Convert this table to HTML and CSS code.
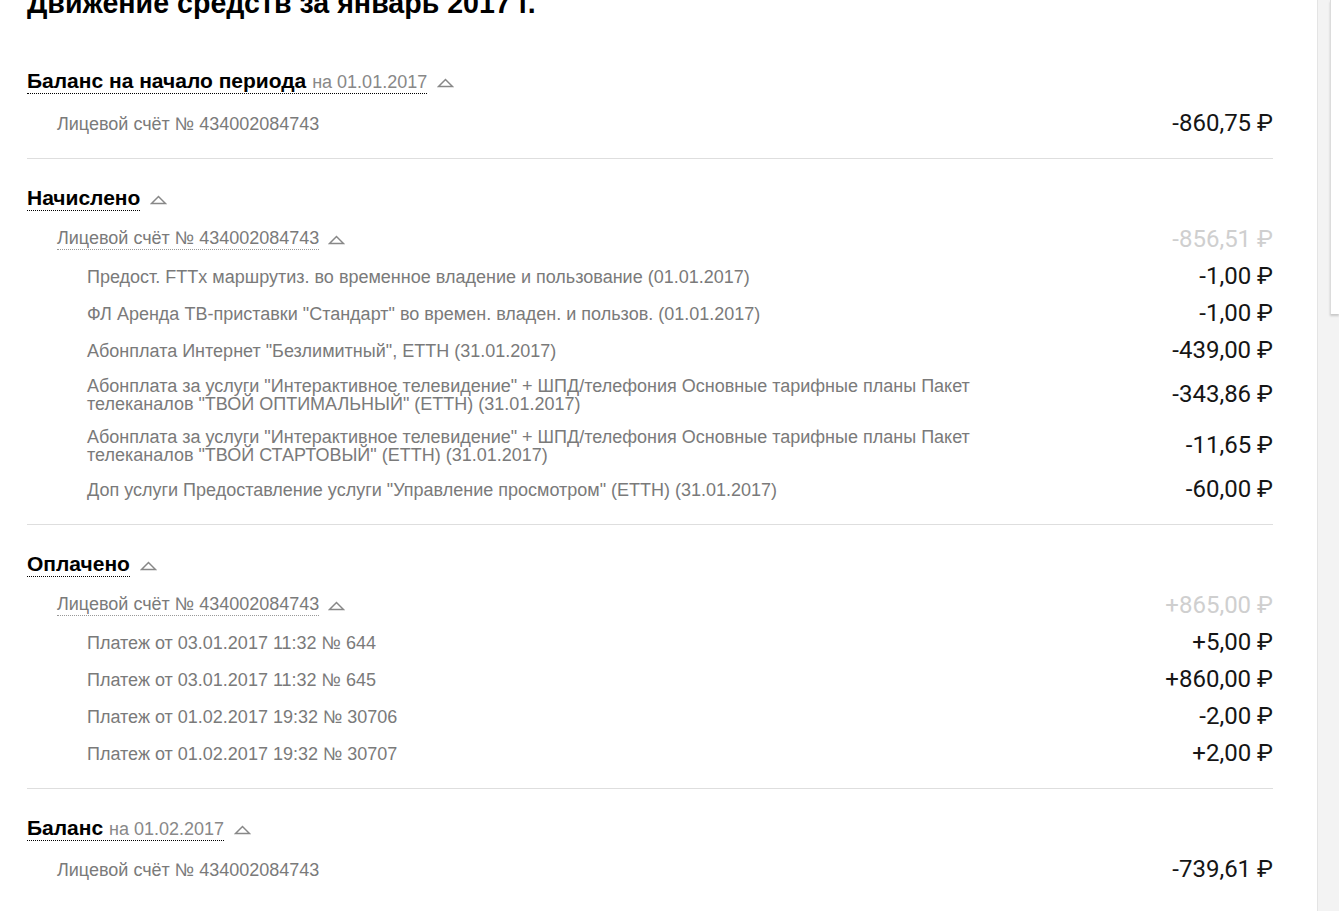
FILE: index.html
```html
<!DOCTYPE html>
<html lang="ru">
<head>
<meta charset="utf-8">
<title>Движение средств</title>
<link rel="stylesheet" href="styles.css">
</head>
<body>
<div class="page">
  <main class="content">
    <h1 class="title">Движение средств за январь 2017 г.</h1>

    <section class="block">
      <div class="head">
        <span class="head-link"><b>Баланс на начало периода</b> <span class="date">на 01.01.2017</span></span>
        <svg class="caret" viewBox="0 0 17 10" width="17" height="10"><polygon points="1.5,8.5 8.5,1.5 15.5,8.5" fill="none" stroke="#888" stroke-width="1.5"/></svg>
      </div>
      <div class="group first">
        <div class="row acc"><span class="label">Лицевой счёт № 434002084743</span><span class="amount">-860,75 ₽</span></div>
      </div>
    </section>

    <section class="block">
      <div class="head">
        <span class="head-link"><b>Начислено</b></span>
        <svg class="caret" viewBox="0 0 17 10" width="17" height="10"><polygon points="1.5,8.5 8.5,1.5 15.5,8.5" fill="none" stroke="#888" stroke-width="1.5"/></svg>
      </div>
      <div class="group">
        <div class="row acc"><span class="acc-head"><span class="label link">Лицевой счёт № 434002084743</span><svg class="caret" viewBox="0 0 17 10" width="17" height="10"><polygon points="1.5,8.5 8.5,1.5 15.5,8.5" fill="none" stroke="#888" stroke-width="1.5"/></svg></span><span class="amount muted">-856,51 ₽</span></div>
        <div class="items">
          <div class="row"><span class="label">Предост. FTTx маршрутиз. во временное владение и пользование (01.01.2017)</span><span class="amount">-1,00 ₽</span></div>
          <div class="row"><span class="label">ФЛ Аренда ТВ-приставки "Стандарт" во времен. владен. и пользов. (01.01.2017)</span><span class="amount">-1,00 ₽</span></div>
          <div class="row"><span class="label">Абонплата Интернет "Безлимитный", ЕТТН (31.01.2017)</span><span class="amount">-439,00 ₽</span></div>
          <div class="row multi"><span class="label">Абонплата за услуги "Интерактивное телевидение" + ШПД/телефония Основные тарифные планы Пакет телеканалов "ТВОЙ ОПТИМАЛЬНЫЙ" (ЕТТН) (31.01.2017)</span><span class="amount">-343,86 ₽</span></div>
          <div class="row multi"><span class="label">Абонплата за услуги "Интерактивное телевидение" + ШПД/телефония Основные тарифные планы Пакет телеканалов "ТВОЙ СТАРТОВЫЙ" (ЕТТН) (31.01.2017)</span><span class="amount">-11,65 ₽</span></div>
          <div class="row"><span class="label">Доп услуги Предоставление услуги "Управление просмотром" (ЕТТН) (31.01.2017)</span><span class="amount">-60,00 ₽</span></div>
        </div>
      </div>
    </section>

    <section class="block">
      <div class="head">
        <span class="head-link"><b>Оплачено</b></span>
        <svg class="caret" viewBox="0 0 17 10" width="17" height="10"><polygon points="1.5,8.5 8.5,1.5 15.5,8.5" fill="none" stroke="#888" stroke-width="1.5"/></svg>
      </div>
      <div class="group">
        <div class="row acc"><span class="acc-head"><span class="label link">Лицевой счёт № 434002084743</span><svg class="caret" viewBox="0 0 17 10" width="17" height="10"><polygon points="1.5,8.5 8.5,1.5 15.5,8.5" fill="none" stroke="#888" stroke-width="1.5"/></svg></span><span class="amount muted">+865,00 ₽</span></div>
        <div class="items">
          <div class="row"><span class="label">Платеж от 03.01.2017 11:32 № 644</span><span class="amount">+5,00 ₽</span></div>
          <div class="row"><span class="label">Платеж от 03.01.2017 11:32 № 645</span><span class="amount">+860,00 ₽</span></div>
          <div class="row"><span class="label">Платеж от 01.02.2017 19:32 № 30706</span><span class="amount">-2,00 ₽</span></div>
          <div class="row"><span class="label">Платеж от 01.02.2017 19:32 № 30707</span><span class="amount">+2,00 ₽</span></div>
        </div>
      </div>
    </section>

    <section class="block last">
      <div class="head">
        <span class="head-link"><b>Баланс</b> <span class="date">на 01.02.2017</span></span>
        <svg class="caret" viewBox="0 0 17 10" width="17" height="10"><polygon points="1.5,8.5 8.5,1.5 15.5,8.5" fill="none" stroke="#888" stroke-width="1.5"/></svg>
      </div>
      <div class="group">
        <div class="row acc"><span class="label">Лицевой счёт № 434002084743</span><span class="amount">-739,61 ₽</span></div>
      </div>
    </section>
  </main>
  <aside class="side"><div class="side-card"></div></aside>
</div>
</body>
</html>
```

FILE: styles.css
```css
html, body {
  margin: 0;
  padding: 0;
  overflow: hidden;
  background: #fff;
}

body {
  font-family: "Liberation Sans", Arial, sans-serif;
  color: #000;
}

.page {
  display: flex;
  min-height: 100vh;
}

.content {
  flex: 0 0 1317px;
  box-sizing: border-box;
  padding: 0 44px 0 27px;
}

.title {
  margin: -13px 0 0;
  font-size: 28.6px;
  line-height: 32px;
  font-weight: bold;
}

.block {
  border-bottom: 1px solid #dedede;
  padding-bottom: 16px;
  margin-bottom: 29px;
}

.block:first-of-type {
  margin-top: 52px;
}

.block.last {
  border-bottom: none;
}

.head {
  display: flex;
  align-items: center;
  gap: 10px;
}

.head-link {
  display: block;
  height: 20px;
  font-size: 21px;
  line-height: 20px;
  padding-bottom: 2px;
  border-bottom: 1px dotted #000;
  white-space: nowrap;
}

.head-link b {
  font-size: 21px;
  font-weight: bold;
  color: #000;
}

.date {
  font-size: 18px;
  color: #888;
}

.caret {
  display: block;
  flex: none;
}

.group {
  margin-top: 10px;
  padding-left: 30px;
}

.group.first {
  margin-top: 11px;
}

.items {
  padding-left: 30px;
}

.row {
  display: flex;
  justify-content: space-between;
  align-items: center;
  padding: 8px 0;
}

.row.multi {
  padding: 7.5px 0;
}

.label {
  font-size: 18px;
  line-height: 18px;
  color: #7a7a7a;
  max-width: 900px;
}

.acc-head {
  display: flex;
  align-items: center;
  gap: 9px;
}

.label.link {
  display: block;
  padding-bottom: 2px;
  border-bottom: 1px dotted #999;
}

.amount {
  font-family: Roboto, "DejaVu Sans", sans-serif;
  font-size: 24px;
  line-height: 21px;
  color: #151515;
  white-space: nowrap;
  flex: none;
}

.amount.muted {
  color: #cfcfcf;
}

.side {
  flex: 1;
  background: #f3f3f3;
  border-left: 1px solid #e4e4e4;
  display: flex;
  justify-content: flex-end;
  align-items: flex-start;
}

.side-card {
  width: 8px;
  height: 314px;
  background: #fff;
  border-left: 1px solid #dcdcdc;
  box-shadow: 0 2px 2px rgba(0, 0, 0, 0.18);
}
```
